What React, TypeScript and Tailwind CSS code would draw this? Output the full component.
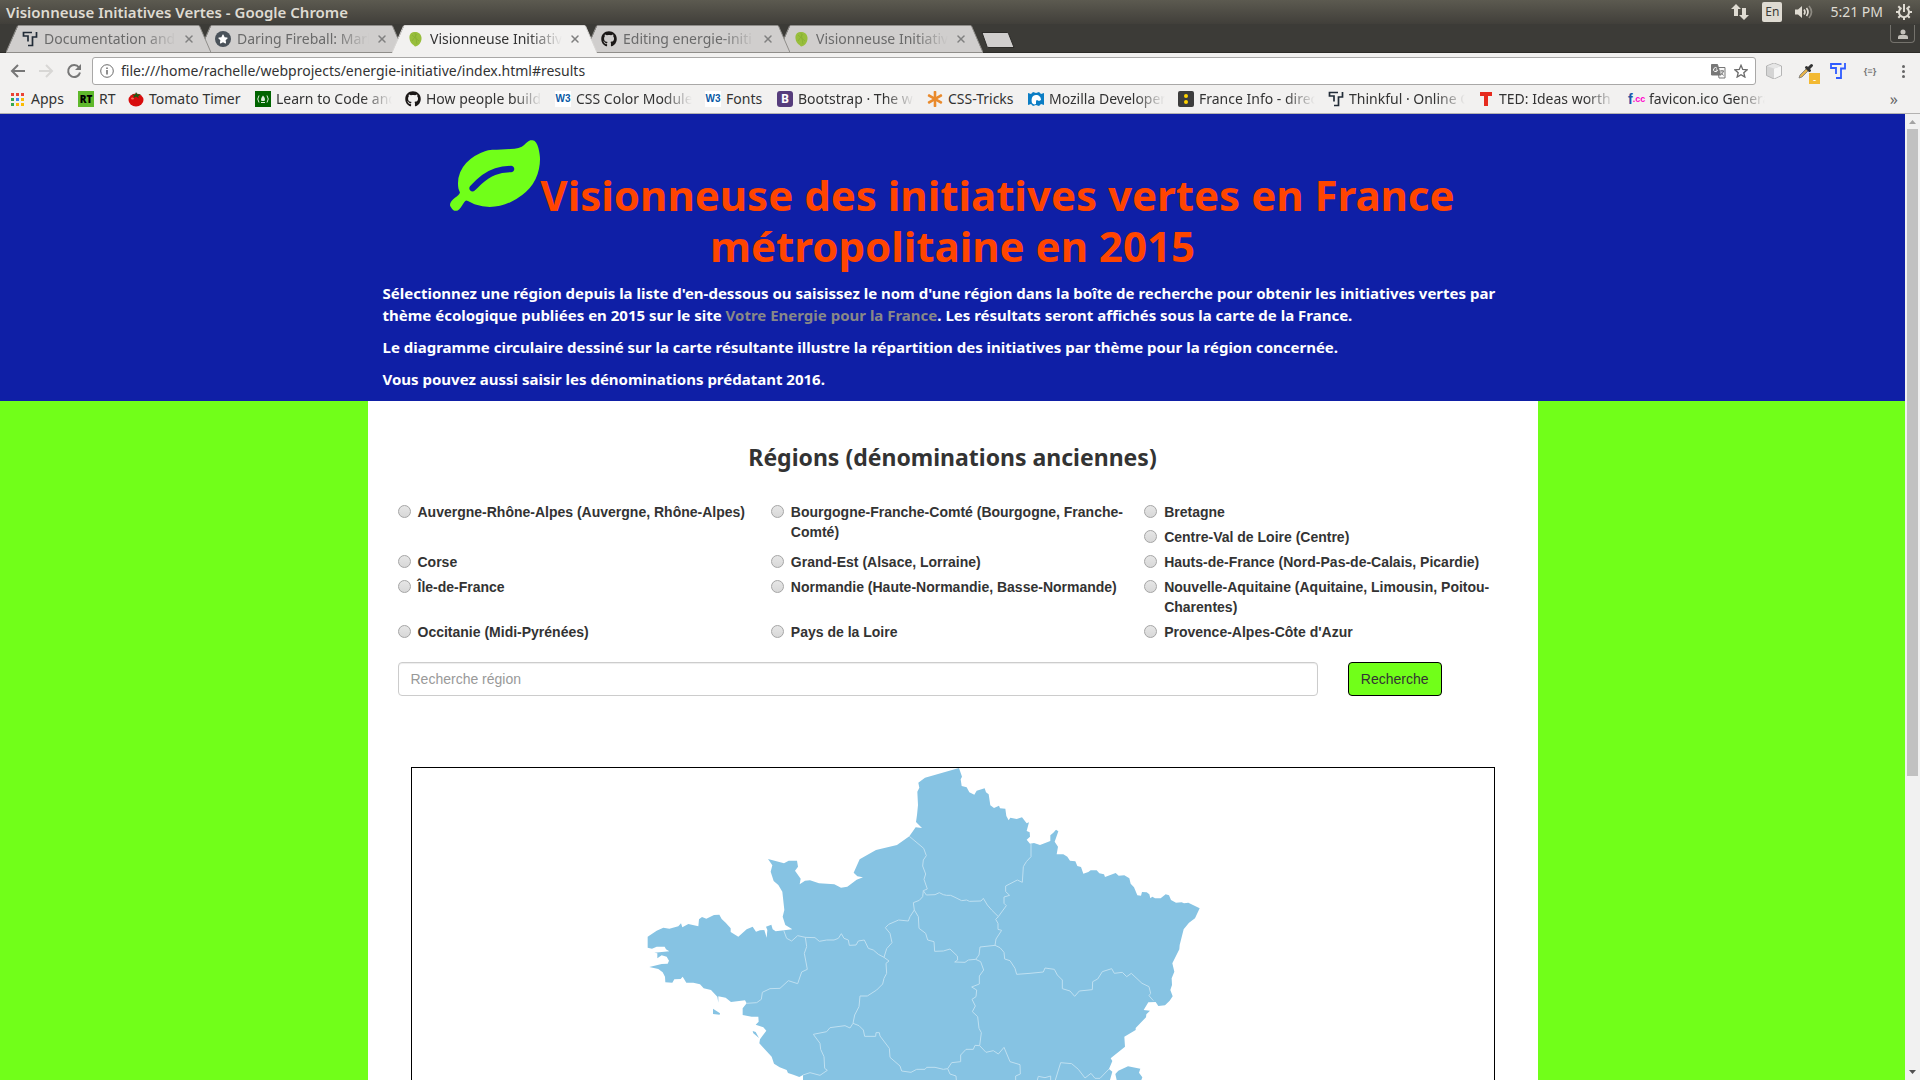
import React from "react";
import { FaGithub, FaStar, FaAsterisk } from "react-icons/fa";
import { X } from "lucide-react";

function ThinkfulIcon({ color }: { color: string }) {
  return (
    <svg viewBox="0 0 16 16" className="size-4 shrink-0" fill="none" stroke={color} strokeWidth="1.700">
      <path d="M10 1.500H1.500V5H6v5.500M14.500 1V6h-4v8.500H6" />
    </svg>
  );
}

function ThinkfulOutline() {
  return (
    <svg viewBox="0 0 16 16" className="size-4 shrink-0" fill="none" stroke="#2f5bff" strokeWidth="1.800">
      <path d="M11.500 1H1v4h5v6M15 0v5.500h-4V15H6" />
    </svg>
  );
}

function LeafFavicon() {
  return (
    <svg viewBox="0 0 16 16" className="size-4 shrink-0">
      <path d="M7 15.500c3 0 7-4 6.500-9C13 2 9 .500 6 1 2.500 1.500 1.200 4 1.500 7.500c.300 3 2 5.500 4 6.500z" fill="#98be3c" />
      <path d="M4 4l7 6M9 3l-5 7M7 2l2 11" stroke="#86b033" strokeWidth="0.800" fill="none" />
    </svg>
  );
}

function StarFavicon() {
  return (
    <span className="flex size-4 shrink-0 items-center justify-center rounded-full bg-[#4a525a]">
      <FaStar className="size-2.5 text-white" />
    </span>
  );
}

function GithubMark() {
  return <FaGithub className="size-4 shrink-0 text-[#1b1817]" />;
}

function AppsIcon() {
  const colors = ["#ea4335", "#ea4335", "#ea4335", "#34a853", "#4285f4", "#fbbc05", "#34a853", "#fbbc05", "#fbbc05"];
  return (
    <svg viewBox="0 0 13 13" className="size-[13px] shrink-0">
      {colors.map((c, i) => (
        <rect key={i} x={(i % 3) * 5} y={Math.floor(i / 3) * 5} width="3" height="3" fill={c} />
      ))}
    </svg>
  );
}

function TomatoIcon() {
  return (
    <svg viewBox="0 0 16 16" className="size-4 shrink-0">
      <ellipse cx="8" cy="9" rx="7.500" ry="6.500" fill="#d80d0d" />
      <path d="M4 3l3 1 1-3 1.500 2.500L13 3l-3 2.500 1 2-3-2-3 2 1-2.500z" fill="#1c5d14" />
      <ellipse cx="4.500" cy="7.500" rx="1.500" ry="1" fill="#ff6d5c" />
    </svg>
  );
}

function MozillaIcon() {
  return (
    <svg viewBox="0 0 16 16" className="size-4 shrink-0">
      <path d="M0 2l3 1 2-2 3 1 3-1 2 2 3-1v12l-3-1-2 2-3-1-3 1-2-2-3 1z" fill="#0b7dc4" />
      <path d="M4 12c-1-4 0-8 4-8 3 0 5 2 5 5l-2 1-2-1c-1 0-1 1-1 4-2 1-3 0-4-1z" fill="#fff" />
    </svg>
  );
}

type Bookmark = { label: string; icon: React.ReactNode; width: string; faded?: boolean };

const w3 = (
  <span className="flex size-4 shrink-0 items-center justify-center bg-white font-['Liberation_Sans'] text-[10px] font-bold text-[#0a5aa5]">
    W3
  </span>
);

const bookmarks: Bookmark[] = [
  { label: "Apps", icon: <AppsIcon />, width: "w-[34px] ml-0.5" },
  {
    label: "RT",
    width: "w-4",
    icon: (
      <span className="flex size-4 shrink-0 items-center justify-center bg-[#5fb92c] text-[10px] font-black text-black">
        RT
      </span>
    ),
  },
  { label: "Tomato Timer", icon: <TomatoIcon />, width: "w-[93px]" },
  {
    label: "Learn to Code and",
    width: "w-[116px]",
    faded: true,
    icon: (
      <svg viewBox="0 0 16 16" className="size-4 shrink-0" fill="none" stroke="#d9ead9">
        <rect width="16" height="16" fill="#006400" stroke="none" />
        <path d="M4 4.500q-2.500 3.500 0 7M12 4.500q2.500 3.500 0 7M6 11.500h4" />
        <path d="M8 4.500q3 3 1.500 5.500h-3Q5 8 8 4.500z" fill="#d9ead9" stroke="none" />
      </svg>
    ),
  },
  { label: "How people build", icon: <GithubMark />, width: "w-[116px]", faded: true },
  { label: "CSS Color Module", icon: w3, width: "w-[116px]", faded: true },
  { label: "Fonts", icon: w3, width: "w-[38px]" },
  {
    label: "Bootstrap · The world",
    width: "w-[116px]",
    faded: true,
    icon: (
      <span className="flex size-4 shrink-0 items-center justify-center rounded-[3px] bg-[#563d7c] text-xs font-bold text-white">
        B
      </span>
    ),
  },
  { label: "CSS-Tricks", icon: <FaAsterisk className="size-4 shrink-0 text-[#e98a2c]" />, width: "w-[67px]" },
  { label: "Mozilla Developer", icon: <MozillaIcon />, width: "w-[116px]", faded: true },
  {
    label: "France Info - direct",
    width: "w-[116px]",
    faded: true,
    icon: (
      <span className="flex size-4 shrink-0 flex-col items-center justify-center gap-0.5 rounded-[2px] bg-[#3d3d3d]">
        <span className="size-1 rounded-full bg-[#ffd400]" />
        <span className="size-1 rounded-full bg-[#ffd400]" />
      </span>
    ),
  },
  { label: "Thinkful · Online C", icon: <ThinkfulIcon color="#222c38" />, width: "w-[116px]", faded: true },
  {
    label: "TED: Ideas worth sp",
    width: "w-[116px]",
    faded: true,
    icon: (
      <svg viewBox="0 0 16 16" className="size-4 shrink-0">
        <path d="M2 1h12v4h-4v10H6V5H2z" fill="#e62b1e" />
      </svg>
    ),
  },
  {
    label: "favicon.ico Generator",
    width: "w-[116px]",
    faded: true,
    icon: (
      <span className="flex size-4 shrink-0 items-center font-['Liberation_Sans'] text-[9px] leading-4 font-bold text-[#f0c]">
        <span className="text-sm leading-4 text-[#1b57a8]">f</span>.cc
      </span>
    ),
  },
];

const tabs = [
  { label: "Documentation and", icon: <ThinkfulIcon color="#222c38" />, active: false, z: "z-[4]" },
  { label: "Daring Fireball: Mark", icon: <StarFavicon />, active: false, z: "z-[3]" },
  { label: "Visionneuse Initiativ", icon: <LeafFavicon />, active: true, z: "z-[5]" },
  { label: "Editing energie-initi", icon: <GithubMark />, active: false, z: "z-[2]" },
  { label: "Visionneuse Initiativ", icon: <LeafFavicon />, active: false, z: "z-[1]" },
];

const fade = "[mask-image:linear-gradient(to_right,black_75%,transparent)]";

function TitleBar() {
  return (
    <div className="flex h-6 items-center justify-between bg-linear-to-b from-[#5c5a50] to-[#413f3a] pr-[7px] pl-1.5 text-[#dfdbd2]">
      <span className="text-[15px] leading-6 font-semibold">Visionneuse Initiatives Vertes - Google Chrome</span>
      <div className="flex items-center text-sm leading-6">
        <svg viewBox="0 0 18 18" className="mr-[13px] size-[18px]" fill="#dfdbd2">
          <path d="M5 1l5 5H7v7H3V6H0zM13 17l-5-5h3V5h4v7h3z" />
        </svg>
        <span className="mr-3 flex size-5 items-center justify-center rounded-[2px] bg-[#dfdbd2] text-xs text-[#3c3b37]">
          En
        </span>
        <svg viewBox="0 0 20 16" className="mr-4 h-4 w-5" fill="none" stroke="#dfdbd2" strokeWidth="1.700">
          <path d="M1 5.500h3L8 2v12l-4-3.500H1z" fill="#dfdbd2" stroke="none" />
          <path d="M10 5.500q2 2.500 0 5M12.500 4q3 4 0 8" />
          <path d="M15 2q5 6 0 12" stroke="#8d8a82" />
        </svg>
        <span className="mr-3 whitespace-nowrap">5:21 PM</span>
        <svg viewBox="0 0 18 18" className="size-[18px]" fill="none" stroke="#dfdbd2" strokeWidth="2">
          <path d="M6.500 4.800a5 5 0 1 0 5 0M9 1v8" />
          <path d="M9 14v3M1 9h3M14 9h3M3.300 14.700l2-2M14.700 14.700l-2-2M3.300 3.300l2 2M14.700 3.300l-2 2" />
        </svg>
      </div>
    </div>
  );
}

function TabStrip() {
  return (
    <div className="flex h-[29px] items-start border-b border-[#2c2b28] bg-[#3c3b37] pt-px pl-1.5">
      {tabs.map((t, i) => (
        <div key={i} className={`relative -mr-3 h-7 w-[205px] ${t.z}`}>
          <svg viewBox="0 0 205 28" className="absolute inset-0 size-full">
            <path
              d="M0 28L12 1Q12 .500 13 .500H192Q193 .500 193.500 1L205 28Z"
              fill={t.active ? "#f2f1f0" : "#d0cecd"}
            />
            <path
              d={
                t.active
                  ? "M0 27.500L11.500 1Q12 .500 13 .500H192Q193 .500 193.500 1L205 27.500"
                  : "M0 27.500L11.500 1Q12 .500 13 .500H192Q193 .500 193.500 1L205 27.500Z"
              }
              fill="none"
              stroke={t.active ? "#d8d6d4" : "#8f8d8a"}
            />
          </svg>
          <div className="relative flex h-[27px] items-center pl-4">
            {t.icon}
            <span
              className={`ml-1.5 w-[132px] overflow-hidden text-sm leading-6 whitespace-nowrap ${fade} ${
                t.active ? "text-[#333]" : "text-[#6a6a6a]"
              }`}
            >
              {t.label}
            </span>
            <button type="button" aria-label={`Close ${t.label}`} className="ml-[7px] text-[#808080]">
              <X className="size-3" strokeWidth={3} />
            </button>
          </div>
        </div>
      ))}
      <button type="button" aria-label="New tab" className="mt-[7px] ml-[10px]">
        <svg viewBox="0 0 34 16" className="h-4 w-[34px]">
          <path d="M1 .500h25q1 0 1.500 1L33 15.500H8q-1.500 0-2-1z" fill="#d0cecd" stroke="#2c2b28" />
        </svg>
      </button>
      <button
        type="button"
        aria-label="Profile"
        className="mr-[5px] ml-auto flex h-[18px] w-[25px] items-center justify-center rounded-b border border-t-0 border-[#74726c]"
      >
        <svg viewBox="0 0 10 10" className="size-2.5" fill="#c4c1ba">
          <circle cx="5" cy="3" r="2.500" />
          <path d="M0 10V8q0-2 2.500-2h5Q10 6 10 8v2z" />
        </svg>
      </button>
    </div>
  );
}

function TranslateIcon() {
  return (
    <svg viewBox="0 0 15 15" className="size-[15px]" fill="none" stroke="#777">
      <path d="M6.500 3.500h7.500v10.500H8z" fill="#f7f7f7" />
      <path d="M.500 .500h6l3 10.500h-9z" fill="#777" />
      <path d="M6 4.300a2 2 0 1 0 .500 1.700H4.800" stroke="#fff" />
      <path d="M9 7h4M11 6v1M12.500 7q-.500 2.500-3 4M10 8.500l2.500 3" />
    </svg>
  );
}

function Toolbar() {
  return (
    <div className="flex h-8 items-center bg-[#f2f1f0] pt-1 pr-[9px] pl-2.5 text-[#333]">
      <button type="button" aria-label="Back">
        <svg viewBox="0 0 16 16" className="size-4" fill="none" stroke="#777" strokeWidth="2">
          <path d="M15 8H2M8 2L2 8l6 6" />
        </svg>
      </button>
      <button type="button" aria-label="Forward" className="ml-3">
        <svg viewBox="0 0 16 16" className="size-4" fill="none" stroke="#d8d7d5" strokeWidth="2">
          <path d="M1 8h13M8 2l6 6-6 6" />
        </svg>
      </button>
      <button type="button" aria-label="Reload" className="ml-3">
        <svg viewBox="0 0 16 16" className="size-4" fill="none" stroke="#777" strokeWidth="2">
          <path d="M13 4.500A6 6 0 1 0 14 9.500" />
          <path d="M15 1v6H9z" fill="#777" stroke="none" />
        </svg>
      </button>
      <div className="ml-2.5 flex h-7 flex-1 items-center rounded-[3px] border border-[#a9a8a7] bg-white pr-[7px] pl-[7px]">
        <svg viewBox="0 0 14 14" className="size-3.5" fill="none" stroke="#6b6b6b">
          <circle cx="7" cy="7" r="6.300" />
          <path d="M7 6v4.500M7 3.500V5" strokeWidth="1.500" />
        </svg>
        <input
          aria-label="Address"
          defaultValue="file:///home/rachelle/webprojects/energie-initiative/index.html#results"
          className="ml-[7px] min-w-0 flex-1 bg-transparent text-sm text-[#333] outline-none"
        />
        <TranslateIcon />
        <svg viewBox="0 0 16 16" className="ml-2 size-3.5" fill="none" stroke="#6b6b6b" strokeWidth="1.500">
          <path d="M8 1.500l2 4.700 5 .400-3.800 3.300 1.200 5L8 12.200 3.600 14.900l1.200-5L1 6.600l5-.400z" />
        </svg>
      </div>
      <svg viewBox="0 0 16 16" className="ml-2.5 size-4">
        <path d="M8 0l7.500 3v9.500L8 16 .500 12.500V3z" fill="#d4d4d4" stroke="#aaa" strokeWidth="0.800" />
        <path d="M8 5.500l7-2.300v9L8 15.500z" fill="#f6f6f6" />
        <path d="M8 5.500L1 3.200 8 .500l7 2.700z" fill="#e6e6e6" />
      </svg>
      <span className="relative ml-4 size-4">
        <svg viewBox="0 0 16 16" className="size-4">
          <path d="M1 15l1-3 7-7 2 2-7 7z" fill="#e4b24a" stroke="#777" strokeWidth="0.800" />
          <path d="M8.500 4.500l3 3M11 5l2.500-2.500" stroke="#333" strokeWidth="3" strokeLinecap="round" />
        </svg>
        <span className="absolute top-2.5 left-[11px] flex size-[11px] items-center justify-center bg-[#f3b932] text-[10px] leading-none text-white">
          -
        </span>
      </span>
      <span className="ml-4">
        <ThinkfulOutline />
      </span>
      <span className="ml-4 w-4 text-center text-[9px] font-bold text-[#777]">{"{≡}"}</span>
      <button type="button" aria-label="Menu" className="ml-[17px] flex w-4 flex-col items-center gap-0.5">
        <span className="size-[3px] rounded-full bg-[#666]" />
        <span className="size-[3px] rounded-full bg-[#666]" />
        <span className="size-[3px] rounded-full bg-[#666]" />
      </button>
    </div>
  );
}

function BookmarksBar() {
  return (
    <nav className="flex h-[29px] items-center gap-[13px] overflow-hidden border-b border-[#b3b2b1] bg-[#f2f1f0] pr-[22px] pl-[11px] text-sm text-[#333]">
      {bookmarks.map((b) => (
        <a key={b.label} href="#results" className="flex shrink-0 items-center gap-[5px]">
          {b.icon}
          <span className={`leading-6 whitespace-nowrap ${b.width} ${b.faded ? `overflow-hidden ${fade}` : ""}`}>
            {b.label}
          </span>
        </a>
      ))}
      <button type="button" aria-label="More bookmarks" className="ml-auto text-base leading-none text-[#666]">
        »
      </button>
    </nav>
  );
}

function Leaf() {
  return (
    <svg viewBox="0 128 1792 1408" className="inline h-[71px] w-[90px] align-baseline" fill="#71ff19">
      <path d="M1280 704q0-26-19-45t-45-19q-172 0-318 49.500t-259.500 134-235.500 219.500q-19 21-19 45 0 26 19 45t45 19q24 0 45-19 27-24 74-71t67-66q137-124 268.500-176t313.500-52q26 0 45-19t19-45zm512-198q0 95-20 193-46 224-184.500 383t-357.500 268q-214 108-438 108-148 0-286-47-15-5-88-42t-96-37q-16 0-39.500 32t-45 70-52.500 70-60 32q-43 0-63.500-17.500t-45.500-59.500q-2-4-6-11t-5.500-10-3-9.500-1.500-13.500q0-35 31-73.500t68-65.500 68-56 31-48q0-4-14-38t-16-44q-9-51-9-104 0-115 43.500-220t119-184.500 170.500-139 204-95.500q55-18 145-25.500t179.500-9 178.500-6 163.500-24 113.500-56.500l29.500-29.500 29.500-28 27-20 36.500-16 43.500-4.500q39 0 70.500 46t47.500 112 24 124 8 96z" />
    </svg>
  );
}

const land =
  "M987 24L996 50 992 58 995 78 1010 82 1018 97 1033 104 1040 92 1064 85 1068 97 1076 103 1081 136 1092 144 1107 137 1110 145 1126 146 1129 168 1136 181 1141 173 1160 177 1176 172 1190 190 1197 187 1190 213 1199 217 1200 230 1190 239 1200 251 1212 249 1230 255 1261 243 1261 226 1270 218 1278 209 1285 214 1274 245 1284 260 1280 283 1300 283 1312 290 1320 302 1336 304 1342 318 1353 321 1360 341 1375 336 1382 331 1400 331 1408 340 1422 343 1425 351 1457 339 1466 347 1483 346 1498 355 1502 371 1512 382 1522 406 1533 407 1536 396 1550 397 1558 403 1561 415 1567 410 1575 415 1592 415 1607 403 1617 406 1623 420 1638 428 1655 427 1662 430 1675 428 1709 445 1695 475 1677 488 1661 508 1649 555 1648 568 1627 610 1633 635 1625 655 1626 675 1621 690 1628 709 1619 722 1605 736 1585 738 1577 726 1555 727 1541 750 1560 752 1549 763 1548 772 1517 804 1517 810 1483 830 1485 860 1442 895 1447 903 1437 927 1447 935 1440 960 519 960 519 945 508 951 490 944 474 939 470 930 449 922 432 911 425 890 388 850 390 838 409 812 400 802 377 794 386 785 385 770 365 770 338 765 338 745 350 730 345 721 303 726 287 713 265 709 265 728 262 710 243 690 221 685 210 673 190 668 169 668 158 650 152 657 133 658 127 668 106 667 105 650 98 637 85 627 58 621 95 612 113 611 117 602 110 590 95 586 82 595 82 580 73 578 118 574 108 568 104 560 80 560 66 566 53 563 53 530 80 512 100 503 118 506 145 499 153 490 157 502 175 492 205 499 207 478 216 471 229 476 252 465 268 464 275 477 287 488 302 505 302 516 325 530 350 508 368 500 378 515 390 511 403 510 410 533 412 510 408 500 424 494 428 508 437 514 487 508 466 495 458 470 463 450 457 395 445 375 431 363 422 335 427 316 414 297 462 310 476 302 501 302 504 320 495 332 512 356 509 373 525 362 540 361 567 370 613 373 633 383 652 380 680 359 699 352 682 349 671 338 689 298 738 270 801 255 838 229 857 202 876 204 858 186 861 165 864 135 862 95 868 83 865 68 885 53Z";
const islands =
  "M1456 942L1465 932 1494 919 1531 926 1527 938 1537 952 1534 960H1460ZM249 746L270 760 269 764 249 762ZM368 813L377 816 387 834 370 820Z";
const borders = [
  "M838 229L881 265 889 287 880 300 878 318 887 342 882 358 892 387 880 392 878 410 868 421 850 428 853 450 840 470 835 483 806 480 776 493 766 503 780 520 786 548 770 566 762 592 777 603 768 610 770 640 762 655 758 672 740 690 712 708 690 708 687 740 674 765 669 790",
  "M880 392L889 405 915 404 928 398 940 404 950 406 962 406 975 412 995 422 1010 420 1018 424 1053 423 1060 415 1072 435 1085 450 1105 470 1115 456 1129 437 1122 430 1122 411 1139 406 1127 395 1127 378 1162 360 1177 367 1180 320 1189 305 1203 290 1203 252",
  "M1105 470L1097 478 1104 490 1104 508 1115 511 1098 537 1095 556 1050 561 1047 585 1037 598 1015 600 1005 607 974 606 983 600 982 588 960 567 940 573 914 574 912 545 893 540 887 520 867 505 865 470 853 450",
  "M1095 556L1110 563 1122 577 1124 597 1140 602 1155 625 1160 643 1200 640 1240 636 1245 624 1273 628 1282 645 1297 660 1297 686 1320 693 1334 709 1348 693 1387 689 1388 665 1403 657 1417 635 1445 626 1453 640 1477 637 1490 650 1504 640 1536 670 1557 680 1562 700 1557 707 1570 722",
  "M1037 598L1052 605 1061 630 1048 648 1048 672 1025 681 1040 690 1038 710 1026 718 1036 738 1027 755 1043 770 1047 805 1054 818 1049 857 1035 856 1030 868 1008 868 992 885 992 905 965 908 953 926 940 928 915 922 890 922 885 928 860 928 843 937 815 933 810 918 780 892 778 865 750 828 748 818 738 818 737 829 704 829 700 810 687 797 669 790",
  "M953 926L960 942 978 948 979 960",
  "M1049 857L1068 877 1090 872 1105 882 1122 862 1140 905 1170 914 1171 942 1157 948 1157 960",
  "M1222 960L1225 949 1245 953 1262 948 1262 960M1276 960L1292 908 1325 911 1345 928 1365 954 1383 940 1395 955 1410 955 1437 927",
  "M669 790L660 804 645 797 600 803 590 815 550 823 570 850 572 868 582 890 584 925 592 931 570 946 540 938 519 945",
  "M461 511L470 535 485 543 503 527 526 532 530 560 523 580 532 628 515 636 503 671 475 662 450 685 420 686 397 697 394 718 380 728 350 730",
  "M526 532L555 533 568 544 590 540 612 540 625 535 634 521 642 535 655 540 658 556 678 555 685 543 703 540 715 565 730 570 745 583 762 592",
];

function FranceMap() {
  return (
    <div className="mx-[43px] mt-[71px] border border-b-0 border-black">
      <svg viewBox="-654 24 3246 936" className="block w-full" role="img" aria-label="Carte de la France">
        <g strokeLinejoin="round">
          <path d={land} fill="#86c3e3" />
          <path d={islands} fill="#86c3e3" />
          {borders.map((d) => (
            <path key={d} d={d} fill="none" stroke="#bfe0f1" strokeWidth="3" />
          ))}
        </g>
      </svg>
    </div>
  );
}

const regions = [
  { id: "ara", label: "Auvergne-Rhône-Alpes (Auvergne, Rhône-Alpes)", cell: "row-span-2" },
  { id: "bfc", label: "Bourgogne-Franche-Comté (Bourgogne, Franche-Comté)", cell: "row-span-2" },
  { id: "bre", label: "Bretagne", cell: "" },
  { id: "cvl", label: "Centre-Val de Loire (Centre)", cell: "" },
  { id: "cor", label: "Corse", cell: "" },
  { id: "ges", label: "Grand-Est (Alsace, Lorraine)", cell: "" },
  { id: "hdf", label: "Hauts-de-France (Nord-Pas-de-Calais, Picardie)", cell: "" },
  { id: "idf", label: "Île-de-France", cell: "" },
  { id: "nor", label: "Normandie (Haute-Normandie, Basse-Normande)", cell: "" },
  { id: "naq", label: "Nouvelle-Aquitaine (Aquitaine, Limousin, Poitou-Charentes)", cell: "" },
  { id: "occ", label: "Occitanie (Midi-Pyrénées)", cell: "" },
  { id: "pdl", label: "Pays de la Loire", cell: "" },
  { id: "pac", label: "Provence-Alpes-Côte d'Azur", cell: "" },
];

function SearchForm() {
  return (
    <form className="font-['Liberation_Sans',sans-serif] text-sm text-[#333]" onSubmit={(e) => e.preventDefault()}>
      <div className="grid grid-cols-3 gap-y-[5px] pr-5 pl-[30px] font-bold">
        {regions.map((r) => (
          <label key={r.id} htmlFor={r.id} className={`flex items-start gap-[7px] pr-4 leading-5 ${r.cell}`}>
            <input
              type="radio"
              id={r.id}
              name="region"
              className="mt-[3px] size-[13px] shrink-0 appearance-none rounded-full border border-[#a5a5a5] bg-linear-to-b from-[#e6e6e6] to-[#d8d8d8]"
            />
            <span>{r.label}</span>
          </label>
        ))}
      </div>
      <div className="mt-5 flex gap-[30px] pr-24 pl-[30px]">
        <input
          type="text"
          aria-label="Recherche région"
          placeholder="Recherche région"
          className="h-[34px] min-w-0 flex-1 rounded border border-[#ccc] px-3 text-sm shadow-[inset_0_1px_1px_rgba(0,0,0,0.075)] placeholder:text-[#999]"
        />
        <button type="submit" className="h-[34px] rounded border border-black bg-[#71ff19] px-3 text-sm text-[#333]">
          Recherche
        </button>
      </div>
    </form>
  );
}

function ScrollBar() {
  return (
    <div className="flex w-[15px] shrink-0 flex-col items-center justify-between bg-[#f1f1f1]">
      <div className="flex min-h-0 w-full flex-1 flex-col items-center">
        <svg viewBox="0 0 15 15" className="size-[15px] shrink-0">
          <path d="M4 10L7.500 6 11 10z" fill="#a3a3a3" />
        </svg>
        <div className="h-[68%] w-[11px] bg-[#c1c1c1]" />
      </div>
      <svg viewBox="0 0 15 15" className="size-[15px] shrink-0">
        <path d="M4 5L7.500 9 11 5z" fill="#505050" />
      </svg>
    </div>
  );
}

export default function App() {
  return (
    <div className="flex h-screen flex-col overflow-hidden font-['Noto_Sans',sans-serif]">
      <TitleBar />
      <TabStrip />
      <Toolbar />
      <BookmarksBar />
      <div className="flex min-h-0 flex-1">
        <main className="min-w-0 flex-1 overflow-hidden bg-[#71ff19]">
          <header className="bg-[#0f1fa6] pt-[26px] pb-[11px]">
            <div className="mx-auto max-w-[1170px] px-[15px] text-[15px] leading-[22px] font-bold text-white">
              <h1 className="mb-[11px] text-center text-[42px] leading-[51px] text-[#ff4500]">
                <Leaf />
                Visionneuse des initiatives vertes en France métropolitaine en 2015
              </h1>
              <p className="mb-2.5">
                Sélectionnez une région depuis la liste d'en-dessous ou saisissez le nom d'une région dans la boîte de
                recherche pour obtenir les initiatives vertes par thème écologique publiées en 2015 sur le site{" "}
                <a href="#results" className="text-[#888]">
                  Votre Energie pour la France
                </a>
                . Les résultats seront affichés sous la carte de la France.
              </p>
              <p className="mb-2.5">
                Le diagramme circulaire dessiné sur la carte résultante illustre la répartition des initiatives par
                thème pour la région concernée.
              </p>
              <p>Vous pouvez aussi saisir les dénominations prédatant 2016.</p>
            </div>
          </header>
          <section className="mx-auto min-h-full max-w-[1170px] bg-white pt-[41px]">
            <h2 className="mb-[30px] text-center text-[23px] leading-[30px] font-bold text-[#333]">
              Régions (dénominations anciennes)
            </h2>
            <SearchForm />
            <FranceMap />
          </section>
        </main>
        <ScrollBar />
      </div>
    </div>
  );
}
